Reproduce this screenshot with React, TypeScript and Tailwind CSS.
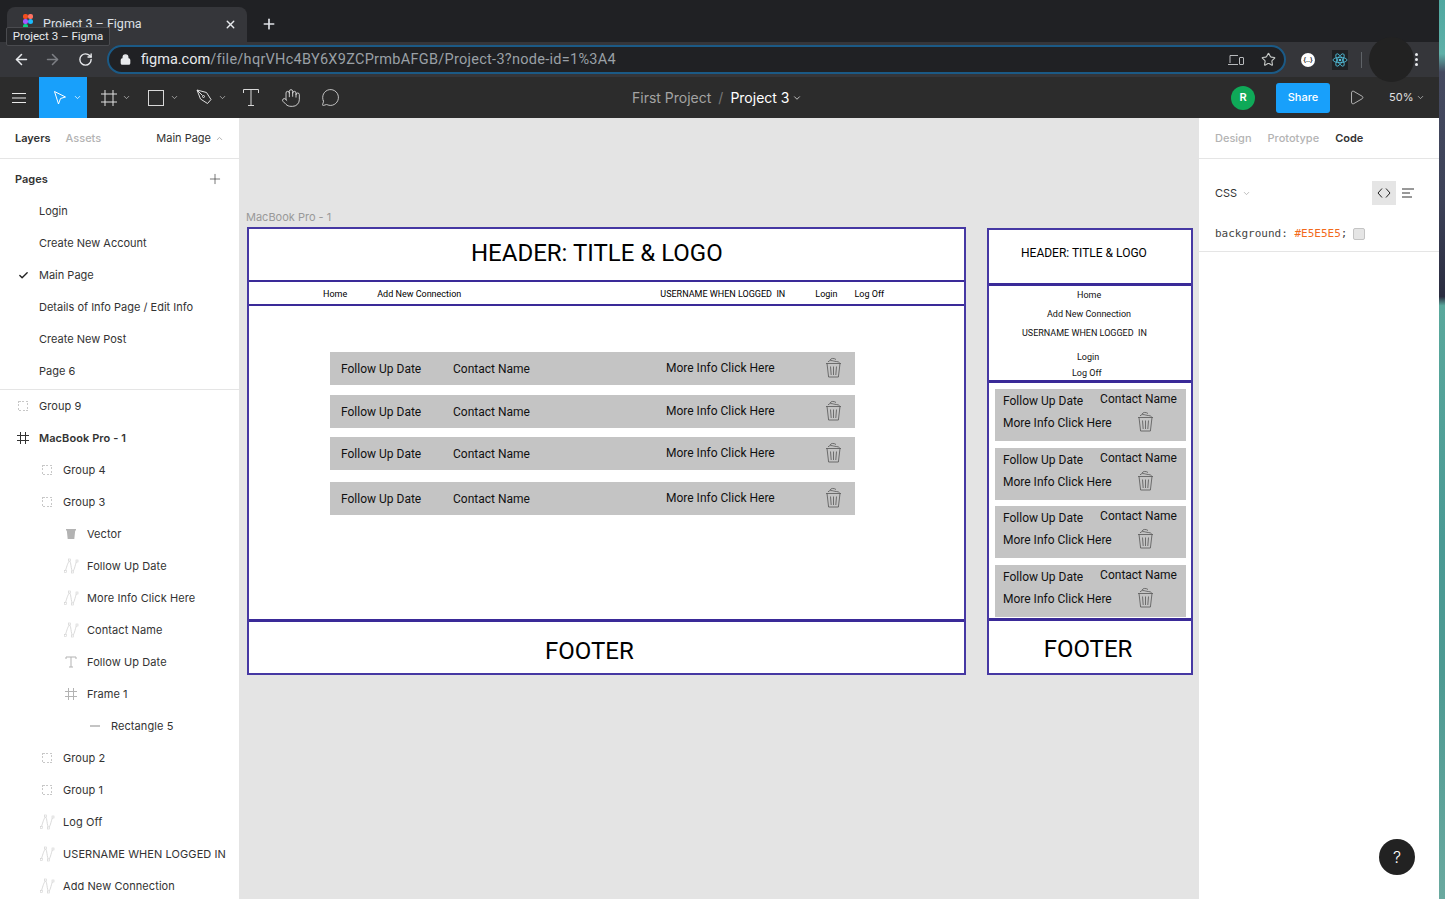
import { ChevronDown, ChevronUp, Star, X, Plus, ArrowLeft, ArrowRight, RotateCw, Lock, Check, MessageCircle, Hand, Play } from "lucide-react";

const pages = ["Login", "Create New Account", "Main Page", "Details of Info Page / Edit Info", "Create New Post", "Page 6"];

type LayerKind = "group" | "frame" | "vector" | "path" | "text" | "rect";

const layers: { name: string; kind: LayerKind; indent: string; bold?: boolean }[] = [
  { name: "Group 9", kind: "group", indent: "pl-[15px]" },
  { name: "MacBook Pro - 1", kind: "frame", indent: "pl-[15px]", bold: true },
  { name: "Group 4", kind: "group", indent: "pl-[39px]" },
  { name: "Group 3", kind: "group", indent: "pl-[39px]" },
  { name: "Vector", kind: "vector", indent: "pl-[63px]" },
  { name: "Follow Up Date", kind: "path", indent: "pl-[63px]" },
  { name: "More Info Click Here", kind: "path", indent: "pl-[63px]" },
  { name: "Contact Name", kind: "path", indent: "pl-[63px]" },
  { name: "Follow Up Date", kind: "text", indent: "pl-[63px]" },
  { name: "Frame 1", kind: "frame", indent: "pl-[63px]" },
  { name: "Rectangle 5", kind: "rect", indent: "pl-[87px]" },
  { name: "Group 2", kind: "group", indent: "pl-[39px]" },
  { name: "Group 1", kind: "group", indent: "pl-[39px]" },
  { name: "Log Off", kind: "path", indent: "pl-[39px]" },
  { name: "USERNAME WHEN LOGGED IN", kind: "path", indent: "pl-[39px]" },
  { name: "Add New Connection", kind: "path", indent: "pl-[39px]" },
];

function LayerIcon({ kind, dark }: { kind: LayerKind; dark?: boolean }) {
  if (kind === "group") {
    return (
      <svg width="16" height="16" viewBox="0 0 16 16" fill="none" stroke="#c8c8c8" strokeWidth="1" strokeDasharray="2 1.5" shapeRendering="crispEdges">
        <rect x="3.500" y="3.500" width="9" height="9" />
      </svg>
    );
  }
  if (kind === "frame") {
    return (
      <svg width="16" height="16" viewBox="0 0 16 16" fill="none" stroke={dark ? "#333" : "#b3b3b3"} strokeWidth="1">
        <path d="M5.500 2v12M10.500 2v12M2 5.500h12M2 10.500h12" />
      </svg>
    );
  }
  if (kind === "vector") {
    return (
      <svg width="16" height="16" viewBox="0 0 16 16" fill="#b3b3b3">
        <path d="M3 3h10v1.500h-.8l-.9 8.500H4.700l-.9-8.500H3z" />
      </svg>
    );
  }
  if (kind === "path") {
    return (
      <svg width="16" height="16" viewBox="0 0 16 16" fill="none" stroke="#d0d0d0" strokeWidth="0.800">
        <path d="M2.500 12.500C4 8 5 4 6.500 3c1.500 0 1.500 9 3 10.500 1.500 0 2.500-6 4-10" />
        <rect x="1.500" y="12.500" width="2" height="2" fill="white" strokeWidth="0.600" />
        <rect x="5.500" y="1" width="2" height="2" fill="white" strokeWidth="0.600" />
        <rect x="8.500" y="13" width="2" height="2" fill="white" strokeWidth="0.600" />
        <rect x="13" y="2" width="2" height="2" fill="white" strokeWidth="0.600" />
      </svg>
    );
  }
  if (kind === "text") {
    return (
      <svg width="16" height="16" viewBox="0 0 16 16" fill="none" stroke="#b3b3b3" strokeWidth="1">
        <path d="M3 5V3h10v2M8 3v10M6 13h4" />
      </svg>
    );
  }
  return <div className="w-[10px] h-[2px] bg-[#c4c4c4] mx-[3px]" />;
}

// the little bin that sits on every row of the wireframe
function Trash() {
  return (
    <svg width="17" height="21" viewBox="0 0 17 21" fill="none" stroke="#555" strokeWidth="0.8" className="shrink-0 -translate-y-px">
      <path d="M1 6.500h15M2 6.500l1.600 13.500h9.800L15 6.500" />
      <path d="M5.500 9.500l.7 8.500M8.500 9.500v8.500M11.500 9.500l-.7 8.500" />
      <path d="M3 5c1-2 4-1.500 5.500-1s5 .5 6 1.500M5 3C6 1 9 1 11 2.500" />
    </svg>
  );
}

const rowSpacing = ["mt-[46px]", "mt-[10px]", "mt-[9px]", "mt-[12px]"];

function DesktopRow({ index }: { index: number }) {
  return (
    <div className={`${rowSpacing[index]} ml-[81px] w-[525px] h-[33px] bg-[#c4c4c4] flex items-center pl-[11px] text-[12px] text-[#111]`}>
      <span className="w-[112px]">Follow Up Date</span>
      <span className="w-[213px]">Contact Name</span>
      <span className="w-[159px] -translate-y-px">More Info Click Here</span>
      <Trash />
    </div>
  );
}

function MobileCard({ gap }: { gap: string }) {
  return (
    <div className={`${gap} ml-[6px] w-[191px] h-[52px] bg-[#c4c4c4] pl-2 pr-[9px] text-[12px] text-[#111] leading-[14px]`}>
      <div className="flex justify-between pt-[3px]">
        <span className="pt-[2px]">Follow Up Date</span>
        <span>Contact Name</span>
      </div>
      <div className="flex items-center pt-[4px]">
        <span className="w-[134px]">More Info Click Here</span>
        <Trash />
      </div>
    </div>
  );
}

export default function App() {
  return (
    <div className="relative w-[1445px] h-[899px] overflow-hidden flex bg-[#202124] font-['Inter',sans-serif]">
      <div className="w-[1439px] h-full flex flex-col shrink-0">
        {/* browser tabs */}
        <div className="h-[42px] bg-[#202124] flex items-end pl-[7px] shrink-0">
          <div className="w-[240px] h-[35px] bg-[#35363a] rounded-t-lg flex items-center pl-[15px] pr-[10px] pb-[1px] text-[#dee1e6] text-[12px] font-['Roboto',sans-serif]">
            <svg width="12" height="16" viewBox="0 0 12 16" className="shrink-0 -mt-1">
              <rect x="1" y="0" width="5" height="5" fill="#f24e1e" rx="2" />
              <rect x="6" y="0" width="5" height="5" fill="#ff7262" rx="2" />
              <rect x="1" y="5" width="5" height="5" fill="#a259ff" rx="2" />
              <circle cx="8.500" cy="7.500" r="2.500" fill="#1abcfe" />
              <rect x="1" y="10" width="5" height="5" fill="#0acf83" rx="2" />
            </svg>
            <span className="ml-[9px] flex-1 text-[12.500px]">Project 3 – Figma</span>
            <X size={13} strokeWidth={2.500} color="#e8eaed" />
          </div>
          <Plus size={16} strokeWidth={2.500} color="#dee1e6" className="ml-[14px] mb-[10px]" />
        </div>

        {/* address bar */}
        <div className="h-[35px] bg-[#35363a] flex items-center shrink-0 pl-[13px]">
          <ArrowLeft size={17} strokeWidth={2.200} color="#e8eaed" />
          <ArrowRight size={17} strokeWidth={2.200} color="#7d7f84" className="ml-[14px]" />
          <RotateCw size={15} strokeWidth={2.200} color="#e8eaed" className="ml-[17px]" />
          <div className="ml-[14px] w-[1179px] h-[29px] rounded-full border-2 border-[#1b5a86] bg-[#202124] flex items-center pl-[11px] pr-[8px] font-['Roboto',sans-serif] text-[14.500px]">
            <Lock size={11} strokeWidth={3} color="#e8eaed" fill="#e8eaed" />
            <span className="ml-[10px] text-[#e8eaed]">figma.com</span>
            <span className="text-[#9aa0a6] flex-1 tracking-[0.28px]">/file/hqrVHc4BY6X9ZCPrmbAFGB/Project-3?node-id=1%3A4</span>
            <svg width="16" height="12" viewBox="0 0 16 12" fill="none" stroke="#b8babd" strokeWidth="1" className="mr-[17px]">
              <path d="M10 1.500H2V9M0 10.500h10" />
              <rect x="11.500" y="3.500" width="4" height="7" rx="0.500" />
            </svg>
            <Star size={15} strokeWidth={1.800} color="#c4c7c5" />
          </div>
          <div className="ml-[15px] w-[14px] h-[14px] rounded-full bg-white flex items-center justify-center text-[6px] text-[#222] font-bold">{"{..}"}</div>
          <div className="ml-[17px] w-[16px] h-[20px] bg-[#1f2124] flex items-center justify-center">
            <svg width="16" height="14" viewBox="-12 -11 24 22" fill="none" stroke="#53c1de" strokeWidth="1.300">
              <circle r="2" fill="#53c1de" stroke="none" />
              <ellipse rx="11" ry="4.200" />
              <ellipse rx="11" ry="4.200" transform="rotate(60)" />
              <ellipse rx="11" ry="4.200" transform="rotate(120)" />
            </svg>
          </div>
          <div className="ml-[13px] w-px h-[16px] bg-[#5f6368]" />
        </div>

        {/* figma toolbar */}
        <div className="h-[41px] bg-[#2c2c2c] flex items-center shrink-0 text-white">
          <div className="w-[39px] flex justify-center pr-px">
            <svg width="14" height="12" viewBox="0 0 14 12" stroke="#e8e8e8" strokeWidth="1"><path d="M0 1.500h14M0 6h14M0 10.500h14" /></svg>
          </div>
          <div className="w-[48px] h-full bg-[#18a0fb] flex items-center pl-[14px] gap-[6px]">
            <svg width="14" height="16" viewBox="0 0 14 16" fill="none" stroke="white" strokeWidth="1"><path d="M1.500 1.500l11 5.500-5 1.500-2 5.500z" /></svg>
            <ChevronDown size={9} strokeWidth={2} />
          </div>
          <div className="ml-[13px] flex items-center gap-[4px]">
            <svg width="18" height="18" viewBox="0 0 18 18" fill="none" stroke="#e0e0e0" strokeWidth="1"><path d="M5 1v16M13 1v16M1 5h16M1 13h16" /></svg>
            <ChevronDown size={9} strokeWidth={1.800} color="#d0d0d0" />
          </div>
          <div className="ml-[17px] flex items-center gap-[6px]">
            <svg width="16" height="16" viewBox="0 0 16 16" fill="none" stroke="#d8d8d8" strokeWidth="1"><rect x="0.500" y="0.500" width="15" height="15" /></svg>
            <ChevronDown size={9} strokeWidth={1.800} color="#d0d0d0" />
          </div>
          <div className="ml-[17px] flex items-center gap-[5px]">
            <svg width="17" height="17" viewBox="0 0 17 17" fill="none" stroke="#e0e0e0" strokeWidth="1"><path d="M1 1l9.500 2.500 4.500 7-3.500 4-7-4.500zM1 1l5.500 5.500" /><circle cx="7.500" cy="7.500" r="1" /></svg>
            <ChevronDown size={9} strokeWidth={1.800} color="#d0d0d0" />
          </div>
          <svg width="16" height="17" viewBox="0 0 16 17" fill="none" stroke="#d8d8d8" strokeWidth="1" className="ml-[16px]"><path d="M.5 4V.5h15V4M8 .5v16M5 16.500h6" /></svg>
          <Hand size={20} strokeWidth={1} color="#e8e8e8" className="ml-[22px]" />
          <MessageCircle size={19} strokeWidth={1} color="#e8e8e8" className="ml-[20px]" />
          <div className="ml-[292px] w-[172px] text-[14px] text-[#a3a3a3] whitespace-nowrap flex items-center">
            First Project <span className="mx-[7px] text-[#777]">/</span> <span className="text-white">Project 3</span>
            <ChevronDown size={10} strokeWidth={2} color="#e0e0e0" className="ml-[3px]" />
          </div>
          <div className="ml-[427px] w-6 h-6 rounded-full bg-[#0fa958] flex items-center justify-center text-[11px] font-semibold">R</div>
          <div className="ml-[21px] w-[54px] h-[30px] rounded-[3px] bg-[#18a0fb] flex items-center justify-center text-[11px] font-medium">Share</div>
          <Play size={17} strokeWidth={1} color="#e8e8e8" className="ml-[18px]" />
          <span className="ml-[24px] text-[11px] text-[#e0e0e0]">50%</span>
          <ChevronDown size={9} strokeWidth={1.800} color="#d0d0d0" className="ml-[3px]" />
        </div>

        <div className="flex-1 flex min-h-0">
          {/* layers panel */}
          <aside className="w-[239px] bg-white shrink-0 text-[11px] text-[#333] overflow-hidden">
            <div className="h-[41px] border-b border-[#e5e5e5] flex items-center pl-[15px] pr-[15px]">
              <span className="font-semibold">Layers</span>
              <span className="ml-[15px] text-[#b3b3b3] font-medium">Assets</span>
              <span className="ml-auto">Main Page</span>
              <ChevronUp size={9} color="#999" className="ml-1" />
            </div>
            <div className="h-[231px] border-b border-[#e5e5e5]">
              <div className="h-9 pt-1 flex items-center justify-between pl-[15px] pr-[16px]">
                <span className="font-semibold">Pages</span>
                <Plus size={16} strokeWidth={1} color="#333" />
              </div>
              {pages.map((page) => (
                <div key={page} className="h-8 flex items-center pl-[18px]">
                  <span className="w-[21px]">{page === "Main Page" && <Check size={11} strokeWidth={3} color="#222" />}</span>
                  <span>{page}</span>
                </div>
              ))}
            </div>
            {layers.map((layer, i) => (
              <div key={i} className={`h-8 flex items-center gap-2 tracking-[0.08px] ${layer.indent}`}>
                <LayerIcon kind={layer.kind} dark={layer.bold} />
                <span className={layer.bold ? "font-semibold" : ""}>{layer.name}</span>
              </div>
            ))}
          </aside>

          {/* canvas */}
          <main className="relative flex-1 bg-[#e4e4e4] font-['Roboto',sans-serif] text-black">
            <span className="absolute left-[7px] top-[91px] text-[11px] text-[#999] font-['Inter',sans-serif]">MacBook Pro - 1</span>

            <section className="absolute left-[8px] top-[109px] w-[719px] h-[448px] bg-white border-2 border-[#4638a3] flex flex-col">
              <div className="h-[51px] shrink-0 flex items-center pl-[222px] pb-[4px] text-[24px]">HEADER: TITLE &amp; LOGO</div>
              <div className="h-[26px] shrink-0 border-y-2 border-[#3a2a98] relative text-[9px] flex items-center pt-[4px] whitespace-pre">
                <span className="ml-[74px]">Home</span>
                <span className="ml-[30px]">Add New Connection</span>
                <span className="ml-[199px]">USERNAME WHEN LOGGED  IN</span>
                <span className="ml-[30px]">Login</span>
                <span className="ml-[17px]">Log Off</span>
              </div>
              <div className="flex-1 min-h-0">
                {[0, 1, 2, 3].map((i) => (
                  <DesktopRow key={i} index={i} />
                ))}
              </div>
              <div className="h-[54px] shrink-0 border-t-[3px] border-[#3a2a98] flex items-center pl-[296px] pt-[6px] text-[24px]">FOOTER</div>
            </section>

            <section className="absolute left-[748px] top-[110px] w-[206px] h-[447px] bg-white border-2 border-[#4638a3] flex flex-col">
              <div className="h-[53px] shrink-0 flex items-center pl-[32px] pb-[8px] text-[12px]">HEADER: TITLE &amp; LOGO</div>
              <div className="h-[100px] shrink-0 border-y-[3px] border-[#3a2a98] flex flex-col items-start text-[9px] text-[#111] pt-[3px] whitespace-pre">
                <span className="leading-[12px] ml-[88px]">Home</span>
                <span className="leading-[12px] mt-[7px] ml-[58px]">Add New Connection</span>
                <span className="leading-[12px] mt-[7px] ml-[33px]">USERNAME WHEN LOGGED  IN</span>
                <span className="leading-[12px] mt-[12px] ml-[88px]">Login</span>
                <span className="leading-[12px] mt-[4px] ml-[83px]">Log Off</span>
              </div>
              <div className="flex-1 min-h-0">
                <MobileCard gap="mt-[6px]" />
                <MobileCard gap="mt-[7px]" />
                <MobileCard gap="mt-[6px]" />
                <MobileCard gap="mt-[7px]" />
              </div>
              <div className="h-[55px] shrink-0 border-t-[3px] border-[#3a2a98] flex items-center justify-center pr-[4px] pt-[4px] text-[24px]">FOOTER</div>
            </section>
          </main>

          {/* code panel */}
          <aside className="w-[240px] bg-white shrink-0 text-[11px] text-[#333]">
            <div className="h-[41px] border-b border-[#e5e5e5] flex items-center pl-4 gap-4">
              <span className="text-[#b3b3b3] font-medium">Design</span>
              <span className="text-[#b3b3b3] font-medium">Prototype</span>
              <span className="font-semibold">Code</span>
            </div>
            <div className="h-[93px] border-b border-[#e5e5e5] px-4">
              <div className="pt-[22px] flex items-center">
                <span>CSS</span>
                <ChevronDown size={9} color="#aaa" className="ml-[5px]" />
                <div className="ml-auto w-6 h-6 bg-[#e5e5e5] flex items-center justify-center text-[#222]">
                  <svg width="14" height="10" viewBox="0 0 14 10" fill="none" stroke="#222" strokeWidth="1"><path d="M5 .5L1 5l4 4.500M9 .5l4 4.500-4 4.500" /></svg>
                </div>
                <svg width="12" height="10" viewBox="0 0 12 10" stroke="#333" strokeWidth="1" className="ml-[6px] mr-[9px]"><path d="M0 1h12M0 5h8M0 9h10" /></svg>
              </div>
              <div className="mt-[21px] flex items-center font-['DejaVu_Sans_Mono',monospace] text-[11px] text-[#444]">
                background:&nbsp;<span className="text-[#f26a1b]">#E5E5E5</span>;
                <span className="ml-[6px] w-3 h-3 rounded-[2px] bg-[#e5e5e5] border border-[#c4c4c4]" />
              </div>
            </div>
          </aside>
        </div>
      </div>

      <div className="flex-1 bg-[linear-gradient(180deg,#4fa8a0_0%,#5fb0a8_6%,#454a60_8%,#3d4258_22%,#2a2d40_33%,#5aa89c_34%,#4a9a94_60%,#4d9a92_75%,#6aa99f_100%)]" />

      {/* tooltip over the tab */}
      <div className="absolute left-[6px] top-[27px] w-[104px] h-[19px] bg-[#292a2d] border border-[#4a4b4f] rounded-[2px] flex items-center justify-center text-[11.500px] text-[#e8eaed] font-['Roboto',sans-serif]">Project 3 – Figma</div>
      {/* blacked out avatar */}
      <div className="absolute left-[1369px] top-[37px] w-[45px] h-[45px] rounded-full bg-[#222222]" />
      <div className="absolute left-[1415px] top-[53px] flex flex-col gap-[2px]">
        <span className="w-[3px] h-[3px] rounded-full bg-[#e8eaed]" />
        <span className="w-[3px] h-[3px] rounded-full bg-[#e8eaed]" />
        <span className="w-[3px] h-[3px] rounded-full bg-[#e8eaed]" />
      </div>
      <div className="absolute left-[1379px] top-[839px] w-9 h-9 rounded-full bg-[#222222] flex items-center justify-center text-white text-[16px] font-light">?</div>
    </div>
  );
}
